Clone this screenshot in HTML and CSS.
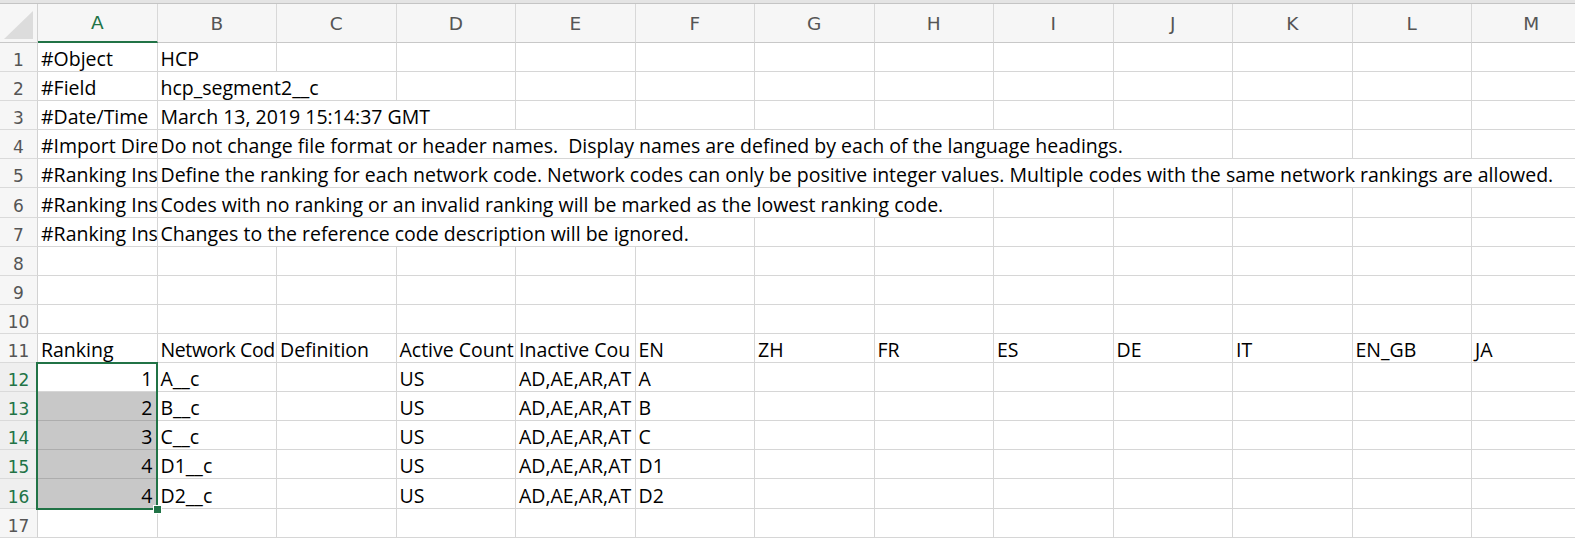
FILE: index.html
```html
<!DOCTYPE html>
<html lang="en">
<head>
    <meta charset="UTF-8">
    <meta name="viewport" content="width=device-width, initial-scale=1.0">
    <title>hcp_segment2__c.csv</title>
    <link rel="stylesheet" href="styles.css">
</head>
<body>
    <div class="sheet">
        <div class="topbar"></div>

        <div class="row head">
            <div class="corner">
                <svg width="36" height="38" viewBox="0 0 36 38"><polygon points="4,35 33,35 33,7" fill="#dcdcdc"/></svg>
            </div>
            <div class="col active">A</div>
            <div class="col">B</div>
            <div class="col">C</div>
            <div class="col">D</div>
            <div class="col">E</div>
            <div class="col">F</div>
            <div class="col">G</div>
            <div class="col">H</div>
            <div class="col">I</div>
            <div class="col">J</div>
            <div class="col">K</div>
            <div class="col">L</div>
            <div class="col">M</div>
        </div>

        <div class="row">
            <div class="num">1</div>
            <div class="cell">#Object</div>
            <div class="cell">HCP</div>
            <div class="cell"></div><div class="cell"></div><div class="cell"></div><div class="cell"></div>
            <div class="cell"></div><div class="cell"></div><div class="cell"></div><div class="cell"></div>
            <div class="cell"></div><div class="cell"></div><div class="cell"></div>
        </div>

        <div class="row">
            <div class="num">2</div>
            <div class="cell">#Field</div>
            <div class="cell span-2">hcp_segment2__c</div>
            <div class="cell"></div><div class="cell"></div><div class="cell"></div>
            <div class="cell"></div><div class="cell"></div><div class="cell"></div><div class="cell"></div>
            <div class="cell"></div><div class="cell"></div><div class="cell"></div>
        </div>

        <div class="row">
            <div class="num">3</div>
            <div class="cell">#Date/Time</div>
            <div class="cell span-3">March 13, 2019 15:14:37 GMT</div>
            <div class="cell"></div><div class="cell"></div><div class="cell"></div>
            <div class="cell"></div><div class="cell"></div><div class="cell"></div>
            <div class="cell"></div><div class="cell"></div><div class="cell"></div>
        </div>

        <div class="row">
            <div class="num">4</div>
            <div class="cell">#Import Dire</div>
            <div class="cell span-9">Do not change file format or header names.&nbsp; Display names are defined by each of the language headings.</div>
            <div class="cell"></div><div class="cell"></div><div class="cell"></div>
        </div>

        <div class="row">
            <div class="num">5</div>
            <div class="cell">#Ranking Ins</div>
            <div class="cell span-12">Define the ranking for each network code. Network codes can only be positive integer values. Multiple codes with the same network rankings are allowed.</div>
        </div>

        <div class="row">
            <div class="num">6</div>
            <div class="cell">#Ranking Ins</div>
            <div class="cell span-7">Codes with no ranking or an invalid ranking will be marked as the lowest ranking code.</div>
            <div class="cell"></div><div class="cell"></div><div class="cell"></div><div class="cell"></div><div class="cell"></div>
        </div>

        <div class="row">
            <div class="num">7</div>
            <div class="cell">#Ranking Ins</div>
            <div class="cell span-5">Changes to the reference code description will be ignored.</div>
            <div class="cell"></div><div class="cell"></div><div class="cell"></div><div class="cell"></div>
            <div class="cell"></div><div class="cell"></div><div class="cell"></div>
        </div>

        <div class="row">
            <div class="num">8</div>
            <div class="cell"></div><div class="cell"></div><div class="cell"></div><div class="cell"></div>
            <div class="cell"></div><div class="cell"></div><div class="cell"></div><div class="cell"></div>
            <div class="cell"></div><div class="cell"></div><div class="cell"></div><div class="cell"></div><div class="cell"></div>
        </div>

        <div class="row">
            <div class="num">9</div>
            <div class="cell"></div><div class="cell"></div><div class="cell"></div><div class="cell"></div>
            <div class="cell"></div><div class="cell"></div><div class="cell"></div><div class="cell"></div>
            <div class="cell"></div><div class="cell"></div><div class="cell"></div><div class="cell"></div><div class="cell"></div>
        </div>

        <div class="row">
            <div class="num">10</div>
            <div class="cell"></div><div class="cell"></div><div class="cell"></div><div class="cell"></div>
            <div class="cell"></div><div class="cell"></div><div class="cell"></div><div class="cell"></div>
            <div class="cell"></div><div class="cell"></div><div class="cell"></div><div class="cell"></div><div class="cell"></div>
        </div>

        <div class="row">
            <div class="num">11</div>
            <div class="cell">Ranking</div>
            <div class="cell tight">Network Cod</div>
            <div class="cell">Definition</div>
            <div class="cell">Active Count</div>
            <div class="cell">Inactive Cou</div>
            <div class="cell">EN</div>
            <div class="cell">ZH</div>
            <div class="cell">FR</div>
            <div class="cell">ES</div>
            <div class="cell">DE</div>
            <div class="cell">IT</div>
            <div class="cell">EN_GB</div>
            <div class="cell">JA</div>
        </div>

        <div class="row">
            <div class="num on">12</div>
            <div class="cell right">1</div>
            <div class="cell">A__c</div>
            <div class="cell"></div>
            <div class="cell">US</div>
            <div class="cell">AD,AE,AR,AT</div>
            <div class="cell">A</div>
            <div class="cell"></div><div class="cell"></div><div class="cell"></div><div class="cell"></div>
            <div class="cell"></div><div class="cell"></div><div class="cell"></div>
        </div>

        <div class="row">
            <div class="num on">13</div>
            <div class="cell right sel">2</div>
            <div class="cell">B__c</div>
            <div class="cell"></div>
            <div class="cell">US</div>
            <div class="cell">AD,AE,AR,AT</div>
            <div class="cell">B</div>
            <div class="cell"></div><div class="cell"></div><div class="cell"></div><div class="cell"></div>
            <div class="cell"></div><div class="cell"></div><div class="cell"></div>
        </div>

        <div class="row">
            <div class="num on">14</div>
            <div class="cell right sel">3</div>
            <div class="cell">C__c</div>
            <div class="cell"></div>
            <div class="cell">US</div>
            <div class="cell">AD,AE,AR,AT</div>
            <div class="cell">C</div>
            <div class="cell"></div><div class="cell"></div><div class="cell"></div><div class="cell"></div>
            <div class="cell"></div><div class="cell"></div><div class="cell"></div>
        </div>

        <div class="row">
            <div class="num on">15</div>
            <div class="cell right sel">4</div>
            <div class="cell">D1__c</div>
            <div class="cell"></div>
            <div class="cell">US</div>
            <div class="cell">AD,AE,AR,AT</div>
            <div class="cell">D1</div>
            <div class="cell"></div><div class="cell"></div><div class="cell"></div><div class="cell"></div>
            <div class="cell"></div><div class="cell"></div><div class="cell"></div>
        </div>

        <div class="row">
            <div class="num on">16</div>
            <div class="cell right sel">4</div>
            <div class="cell">D2__c</div>
            <div class="cell"></div>
            <div class="cell">US</div>
            <div class="cell">AD,AE,AR,AT</div>
            <div class="cell">D2</div>
            <div class="cell"></div><div class="cell"></div><div class="cell"></div><div class="cell"></div>
            <div class="cell"></div><div class="cell"></div><div class="cell"></div>
        </div>

        <div class="row">
            <div class="num">17</div>
            <div class="cell"></div><div class="cell"></div><div class="cell"></div><div class="cell"></div>
            <div class="cell"></div><div class="cell"></div><div class="cell"></div><div class="cell"></div>
            <div class="cell"></div><div class="cell"></div><div class="cell"></div><div class="cell"></div><div class="cell"></div>
        </div>

        <!-- selected range A12:A16 -->
        <div class="selection"><span class="handle"></span></div>
    </div>
</body>
</html>
```

FILE: styles.css
```css
html, body {
    margin: 0;
    padding: 0;
    background: #fff;
    overflow: hidden;
}
.sheet {
    position: relative;
    width: 1575px;
    height: 541px;
    overflow: hidden;
    font-family: 'Open Sans', Lato, sans-serif;
    font-size: 19.5px;
    color: #000;
}
.topbar {
    height: 3px;
    background: #e4e4e4;
    border-bottom: 1px solid #c4c4c4;
}
.row {
    display: grid;
    grid-template-columns: 38px repeat(13, 119.5px);
    height: 29.1px;
}
.row.head {
    height: 39px;
    background: #f6f6f6;
}
.corner {
    border-right: 1px solid #d2d2d2;
    border-bottom: 1px solid #c8c8c8;
    display: flex;
    align-items: flex-start;
}
.col {
    border-right: 1px solid #d8d8d8;
    border-bottom: 1px solid #c8c8c8;
    display: flex;
    align-items: center;
    justify-content: center;
    font-family: 'DejaVu Sans', sans-serif;
    font-size: 18.5px;
    color: #555;
}
.col.active {
    color: #217346;
    border-bottom: 2px solid #217346;
}
.num {
    background: #f6f6f6;
    border-right: 1px solid #d2d2d2;
    border-bottom: 1px solid #dadada;
    display: flex;
    align-items: flex-end;
    justify-content: center;
    padding-bottom: 1px;
    box-sizing: border-box;
    font-family: 'DejaVu Sans', sans-serif;
    font-size: 17px;
    color: #555;
}
.num.on {
    color: #217346;
    background: #efefef;
}
.cell {
    border-right: 1px solid #d6d6d6;
    border-bottom: 1px solid #d6d6d6;
    display: flex;
    align-items: flex-end;
    padding: 0 3px 2px;
    box-sizing: border-box;
    white-space: nowrap;
    overflow: hidden;
    line-height: 20px;
}
.cell.tight {
    letter-spacing: -0.4px;
}
.cell.right {
    justify-content: flex-end;
    padding-right: 4px;
}
.cell.sel {
    background: #c8c8c8;
    border-bottom-color: #adadad;
}
.span-2 { grid-column: span 2; }
.span-3 { grid-column: span 3; }
.span-5 { grid-column: span 5; }
.span-7 { grid-column: span 7; }
.span-9 { grid-column: span 9; }
.span-12 { grid-column: span 12; }
.selection {
    position: absolute;
    left: 36px;
    top: 362px;
    width: 118px;
    height: 144px;
    border: 2px solid #217346;
    pointer-events: none;
}
.handle {
    position: absolute;
    right: -6px;
    bottom: -6px;
    width: 7px;
    height: 7px;
    background: #217346;
    border: 1px solid #fff;
}
```
